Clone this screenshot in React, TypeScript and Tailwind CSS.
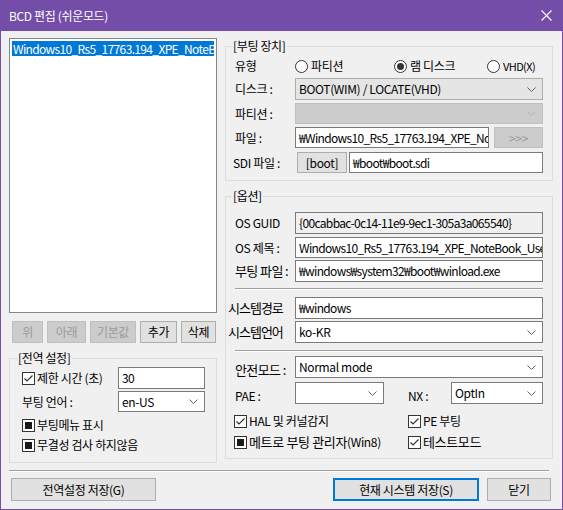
import type { ReactNode } from 'react';

function Chevron({ muted = false }: { muted?: boolean }) {
  return (
    <svg width="9" height="5" viewBox="0 0 9 5" className="shrink-0">
      <polyline points="0.5,0.5 4.5,4.5 8.5,0.5" fill="none" stroke={muted ? '#b4b4b4' : '#606060'} strokeWidth="1" />
    </svg>
  );
}

function Group({ title, className, legendClass, children }: { title: string; className: string; legendClass: string; children: ReactNode }) {
  return (
    <fieldset className={`min-w-0 border border-[#dcdcdc] ${className}`}>
      <legend className={`px-[1px] leading-[16px] ${legendClass}`}>{title}</legend>
      {children}
    </fieldset>
  );
}

function Input({ value, className = '', readOnly = false }: { value: string; className?: string; readOnly?: boolean }) {
  return (
    <div
      className={`flex h-full min-w-0 items-center overflow-hidden whitespace-nowrap border border-[#7a7a7a] pl-[3px] tracking-[-0.65px] ${
        readOnly ? 'bg-[#f0f0f0]' : 'bg-white'
      } ${className}`}
    >
      {value}
    </div>
  );
}

function Select({ value = '', variant = 'white', className = '' }: { value?: string; variant?: 'white' | 'gray' | 'disabled'; className?: string }) {
  const look =
    variant === 'gray'
      ? 'bg-[#e5e5e5] border-[#acacac]'
      : variant === 'disabled'
        ? 'bg-[#cccccc] border-[#bfbfbf]'
        : 'bg-white border-[#7a7a7a]';
  return (
    <div className={`flex h-full min-w-0 items-center justify-between border pl-[3px] pr-[6px] ${look} ${className}`}>
      <span className="overflow-hidden whitespace-nowrap">{value}</span>
      <Chevron muted={variant === 'disabled'} />
    </div>
  );
}

function Btn({ label, disabled = false, className = '' }: { label: string; disabled?: boolean; className?: string }) {
  return (
    <div
      className={`flex h-full min-w-0 items-center justify-center border ${
        disabled ? 'border-[#bfbfbf] bg-[#cccccc] text-[#9a9a9a]' : 'border-[#adadad] bg-[#e1e1e1]'
      } ${className}`}
    >
      {label}
    </div>
  );
}

function Check({ state, label, className = '' }: { state: 'on' | 'fill'; label: ReactNode; className?: string }) {
  return (
    <div className={`flex h-[20px] items-center gap-[2px] ${className}`}>
      <div className="flex h-[13px] w-[13px] shrink-0 items-center justify-center border border-[#333333] bg-white">
        {state === 'on' ? (
          <svg width="11" height="11" viewBox="0 0 11 11">
            <polyline points="1.5,5.5 4,8 9.5,2.5" fill="none" stroke="#333333" strokeWidth="1.2" />
          </svg>
        ) : (
          <div className="h-[7px] w-[7px] bg-[#1a1a1a]" />
        )}
      </div>
      <span className="whitespace-nowrap">{label}</span>
    </div>
  );
}

function Radio({ checked = false, label, className = '' }: { checked?: boolean; label: ReactNode; className?: string }) {
  return (
    <div className={`flex items-center gap-[3px] ${className}`}>
      <div className="flex h-[13px] w-[13px] items-center justify-center rounded-full border border-[#333333] bg-white">
        {checked && <div className="h-[7px] w-[7px] rounded-full bg-[#333333]" />}
      </div>
      <span className="whitespace-nowrap">{label}</span>
    </div>
  );
}

export default function App() {
  return (
    <div className="flex h-[510px] w-[563px] flex-col overflow-hidden font-['Noto_Sans_CJK_KR',sans-serif] text-[12px] leading-[16px] tracking-[-0.35px] text-black">
      <div className="flex h-[31px] shrink-0 items-center justify-between bg-[#744da9] pl-[9px] pr-[11px] text-white">
        <span>BCD 편집 (쉬운모드)</span>
        <svg width="11" height="11" viewBox="0 0 11 11">
          <path d="M0.5 0.5 L10.5 10.5 M10.5 0.5 L0.5 10.5" stroke="white" strokeWidth="1.1" />
        </svg>
      </div>

      <div className="flex flex-1 flex-col border-x border-b border-[#744da9] bg-[#f0f0f0] pl-[8px] pr-[9px]">
        <div className="flex gap-[8px] pt-[7px]">
          {/* left column */}
          <div className="flex w-[208px] flex-col">
            <div className="h-[275px] border border-[#828790] bg-white p-[2px]">
              <div className="h-[15px] overflow-hidden whitespace-nowrap bg-[#0078d7] pl-[1px] leading-[15px] tracking-[-0.65px] text-white">
                Windows10_Rs5_17763.194_XPE_NoteBook_User
              </div>
            </div>
            <div className="mt-[8px] flex h-[22px] gap-[4px] pl-[3px]">
              <Btn label="위" disabled className="w-[31px]" />
              <Btn label="아래" disabled className="w-[39px]" />
              <Btn label="기본값" disabled className="w-[46px]" />
              <Btn label="추가" className="w-[37px]" />
              <Btn label="삭제" className="w-[35px]" />
            </div>
            <Group title="[전역 설정]" className="mt-[7px] pb-[7px] pl-[12px] pr-[11px]" legendClass="-ml-[5px]">
              <div className="mt-[1px] flex h-[22px]">
                <Check state="on" label="제한 시간 (초)" className="w-[96px] self-center" />
                <Input value="30" className="w-[87px]" />
              </div>
              <div className="mt-[2px] flex h-[21px]">
                <div className="flex w-[96px] items-center">부팅 언어 :</div>
                <Select value="en-US" className="w-[87px]" />
              </div>
              <Check state="fill" label="부팅메뉴 표시" className="mt-[3px]" />
              <Check state="fill" label="무결성 검사 하지않음" />
            </Group>
          </div>

          {/* right column */}
          <div className="flex w-[328px] flex-col">
            <Group title="[부팅 장치]" className="pb-[7px] px-[9px]" legendClass="-ml-[3px]">
              <div className="mt-[2px] flex h-[20px] items-center">
                <div className="w-[60px]">유형</div>
                <Radio label="파티션" className="w-[99px]" />
                <Radio checked label="램 디스크" className="w-[93px]" />
                <Radio label={<span className="text-[11px] tracking-[-0.6px]">VHD(X)</span>} />
              </div>
              <div className="mt-[2px] flex h-[22px]">
                <div className="flex w-[60px] shrink-0 items-center">디스크 :</div>
                <Select value="BOOT(WIM) / LOCATE(VHD)" variant="gray" className="flex-1" />
              </div>
              <div className="mt-[3px] flex h-[21px]">
                <div className="flex w-[60px] shrink-0 items-center">파티션 :</div>
                <Select variant="disabled" className="flex-1" />
              </div>
              <div className="mt-[3px] flex h-[21px]">
                <div className="flex w-[60px] shrink-0 items-center">파일 :</div>
                <Input value="₩Windows10_Rs5_17763.194_XPE_NoteBook_User.wim" className="w-[194px] shrink-0" />
                <Btn label=">>>" disabled className="ml-[5px] flex-1" />
              </div>
              <div className="mt-[4px] flex h-[21px]">
                <div className="-ml-[2px] flex w-[62px] shrink-0 items-center">SDI 파일 :</div>
                <Btn label="[boot]" className="ml-[2px] w-[50px] shrink-0" />
                <Input value="₩boot₩boot.sdi" className="ml-[2px] flex-1" />
              </div>
            </Group>

            <Group title="[옵션]" className="mt-[7px] pb-[6px] px-[9px]" legendClass="-ml-[3px]">
              <div className="mt-[8px] flex h-[22px]">
                <div className="flex w-[60px] shrink-0 items-center">OS GUID</div>
                <Input value="{00cabbac-0c14-11e9-9ec1-305a3a065540}" readOnly className="flex-1" />
              </div>
              <div className="mt-[3px] flex h-[21px]">
                <div className="flex w-[60px] shrink-0 items-center">OS 제목 :</div>
                <Input value="Windows10_Rs5_17763.194_XPE_NoteBook_User" className="flex-1" />
              </div>
              <div className="mt-[2px] flex h-[22px]">
                <div className="flex w-[60px] shrink-0 items-center whitespace-nowrap text-[13px] tracking-[-0.6px]">부팅 파일 :</div>
                <Input value="₩windows₩system32₩boot₩winload.exe" className="flex-1" />
              </div>
              <div className="mt-[6px] h-[2px] border-t border-[#a0a0a0] border-b border-b-white" />
              <div className="mt-[7px] flex h-[22px]">
                <div className="-ml-[7px] flex w-[67px] shrink-0 items-center text-[13px] tracking-[-1px]">시스템경로</div>
                <Input value="₩windows" className="flex-1" />
              </div>
              <div className="mt-[2px] flex h-[22px]">
                <div className="-ml-[7px] flex w-[67px] shrink-0 items-center text-[13px] tracking-[-1px]">시스템언어</div>
                <Select value="ko-KR" className="flex-1" />
              </div>
              <div className="mt-[7px] h-[2px] border-t border-[#a0a0a0] border-b border-b-white" />
              <div className="mt-[4px] flex h-[22px]">
                <div className="flex w-[60px] shrink-0 items-end whitespace-nowrap text-[13px] tracking-[-0.6px]">안전모드 :</div>
                <Select value="Normal mode" className="flex-1" />
              </div>
              <div className="mt-[4px] flex h-[22px]">
                <div className="flex w-[60px] shrink-0 items-end">PAE :</div>
                <Select className="w-[89px] shrink-0" />
                <div className="ml-[24px] flex w-[43px] shrink-0 items-end">NX :</div>
                <Select value="OptIn" className="flex-1" />
              </div>
              <div className="mt-[7px] flex">
                <Check state="on" label="HAL 및 커널감지" className="-ml-[1px] w-[174px]" />
                <Check state="on" label="PE 부팅" />
              </div>
              <div className="mt-[1px] flex">
                <Check state="fill" label={<span className="text-[13px]">메트로 부팅 관리자<span className="text-[12px]">(Win8)</span></span>} className="-ml-[1px] w-[174px]" />
                <Check state="on" label={<span className="text-[13px]">테스트모드</span>} />
              </div>
            </Group>
          </div>
        </div>

        <div className="mr-[4px] mt-[7px] h-[2px] border-t border-[#a0a0a0] border-b border-b-white" />

        <div className="mt-[6px] flex h-[23px] pl-[2px] pr-[2px]">
          <Btn label="전역설정 저장(G)" className="w-[145px]" />
          <div className="flex-1" />
          <Btn label="현재 시스템 저장(S)" className="w-[146px] !border-2 !border-[#0078d7]" />
          <Btn label="닫기" className="ml-[8px] w-[64px]" />
        </div>
      </div>
    </div>
  );
}
